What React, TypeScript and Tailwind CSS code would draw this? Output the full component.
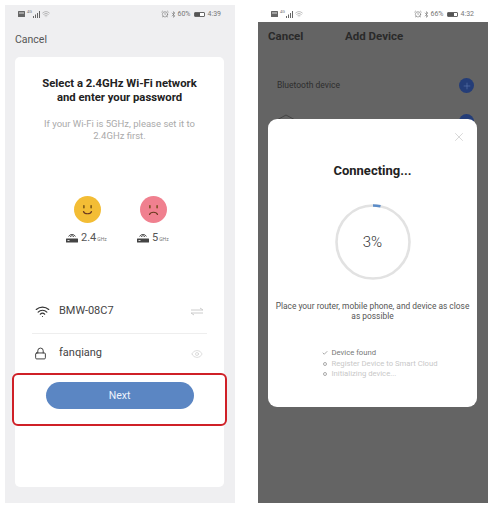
import { AlarmClock, Bluetooth, Check, Eye, Lock, Plus, Wifi, X } from "lucide-react";

function StatusBar({ battery, level, time }: { battery: string; level: number; time: string }) {
  return (
    <div className="flex h-[16px] items-center justify-between pl-[13px] pr-[14px] text-[7px] leading-none text-[#777]">
      <div className="flex items-center gap-[1px]">
        <svg width="7" height="6" viewBox="0 0 7 6">
          <rect width="7" height="6" rx="0.5" fill="#666" />
          <rect x="1" y="1.5" width="5" height="1" fill="#ddd" />
        </svg>
        <span className="ml-[1px] self-start text-[4px]">4G</span>
        <svg width="7" height="7" viewBox="0 0 7 7" fill="#666">
          <rect x="0" y="5" width="1" height="2" />
          <rect x="2" y="3.5" width="1" height="3.5" />
          <rect x="4" y="2" width="1" height="5" />
          <rect x="6" y="0" width="1" height="7" />
        </svg>
        <Wifi size={8} strokeWidth={1.6} className="ml-[1px] text-[#888]" />
      </div>
      <div className="flex items-center gap-[1px]">
        <AlarmClock size={8} strokeWidth={1.8} />
        <Bluetooth size={7} strokeWidth={2} />
        <span>{battery}</span>
        <div className="mx-[2px] flex h-[5px] w-[11px] items-center rounded-[1px] border border-[#666] bg-white">
          <div className="h-full bg-[#555]" style={{ width: `${level}%` }} />
        </div>
        <span>{time}</span>
      </div>
    </div>
  );
}

function RouterIcon() {
  return (
    <svg width="12" height="11" viewBox="0 0 12 11" fill="none" stroke="#444">
      <path d="M2.5 4.5a4 4 0 0 1 7 0M4 5a2.2 2.2 0 0 1 4 0" strokeWidth="0.9" />
      <rect x="0" y="6.5" width="12" height="4" rx="0.5" fill="#444" stroke="none" />
      <rect x="1.5" y="8" width="2" height="0.8" fill="#fff" stroke="none" />
    </svg>
  );
}

function Band({ big }: { big: string }) {
  return (
    <div className="flex items-center gap-[3px]">
      <RouterIcon />
      <span className="text-[11px] leading-none text-[#555]">{big}</span>
      <span className="mt-[3px] -ml-[2px] text-[5px] leading-none text-[#777]">GHz</span>
    </div>
  );
}

function Face({ color, mouth }: { color: string; mouth: string }) {
  return (
    <svg width="27" height="27" viewBox="0 0 27 27" fill="none">
      <circle cx="13.5" cy="13.5" r="13.5" fill={color} />
      <rect x="9.2" y="9" width="1.4" height="3.4" rx="0.7" fill="#6b4a12" />
      <rect x="16.4" y="9" width="1.4" height="3.4" rx="0.7" fill="#6b4a12" />
      <path d={mouth} stroke="#6b3a20" strokeWidth="1.2" strokeLinecap="round" />
    </svg>
  );
}

function LeftPhone() {
  return (
    <div className="flex h-[498px] w-[230px] flex-col bg-[#efeff1]">
      <div className="mt-[1px]">
        <StatusBar battery="60%" level={65} time="4:39" />
      </div>
      <div className="ml-[10px] mt-[11px] h-[14px] text-[10.5px] leading-[14px] text-[#555]">Cancel</div>
      <div className="ml-[10px] mt-[10px] flex h-[430px] w-[209px] flex-col rounded-[5px] bg-white">
        <h1 className="mt-[20px] text-center text-[11.3px] font-bold leading-[14px] text-[#222]">
          Select a 2.4GHz Wi-Fi network
          <br />
          and enter your password
        </h1>
        <p className="mt-[13px] text-center text-[9.5px] leading-[11.5px] text-[#aaa]">
          If your Wi-Fi is 5GHz, please set it to
          <br />
          2.4GHz first.
        </p>
        <div className="mt-[55px] flex pl-[39px]">
          <div className="flex w-[66px] flex-col items-center">
            <Face color="#f3bd35" mouth="M9.5 15.5c1 3 7 3 8 0" />
          </div>
          <div className="flex w-[66px] flex-col items-center">
            <Face color="#f0808f" mouth="M9.5 18.5c1-3 7-3 8 0" />
          </div>
        </div>
        <div className="mt-[9px] flex pl-[51px]">
          <div className="w-[71px]">
            <Band big="2.4" />
          </div>
          <Band big="5" />
        </div>
        <div className="mx-[17px] mt-[47px] flex h-[44px] items-center border-b border-[#eee]">
          <Wifi size={15} strokeWidth={1.8} className="ml-[3px] text-[#333]" />
          <span className="ml-[9px] text-[11px] text-[#444]">BMW-08C7</span>
          <svg className="ml-auto mr-[4px]" width="12" height="9" viewBox="0 0 12 9" fill="none" stroke="#ccc">
            <path d="M0 3h12L9 1M12 6H0l3 2" strokeWidth="1" />
          </svg>
        </div>
        <div className="mx-[17px] flex h-[39px] items-center">
          <Lock size={13} strokeWidth={1.7} className="ml-[2px] text-[#333]" />
          <span className="ml-[12px] text-[11px] text-[#444]">fanqiang</span>
          <Eye size={12} strokeWidth={1.3} className="ml-auto mr-[4px] text-[#ccc]" />
        </div>
        <div className="-mx-[3px] flex h-[53px] items-start justify-center rounded-[6px] border-2 border-[#cf2027] bg-white pt-[7px]">
          <button className="flex h-[27px] w-[148px] items-center justify-center rounded-full bg-[#5b86c3] text-[10.5px] text-[#eef3fb]">
            Next
          </button>
        </div>
      </div>
    </div>
  );
}

function RightPhone() {
  return (
    <div className="w-[230px]">
      <div className="mt-[1px] h-[16px]">
        <StatusBar battery="66%" level={75} time="4:32" />
      </div>
      <div className="relative h-[481px] bg-[#646464]">
        <div className="flex h-[21px] items-end pl-[10px] text-[11.5px] font-bold leading-[14px] text-[#2a2a2a]">
          <span className="w-[77px]">Cancel</span>
          <span>Add Device</span>
        </div>
        <div className="mt-[35px] flex h-[15px] items-center justify-between pl-[19px] pr-[14px]">
          <span className="text-[8.5px] text-[#2e2e2e]">Bluetooth device</span>
          <div className="flex h-[15px] w-[15px] items-center justify-center rounded-full bg-[#243d78]">
            <Plus size={10} strokeWidth={1.5} className="text-[#5f78ad]" />
          </div>
        </div>
        <div className="mt-[21px] flex items-start justify-between pl-[16px] pr-[14px]">
          <svg width="24" height="8" viewBox="0 0 24 8" fill="none" stroke="#444">
            <path d="M1 7L12 1l11 6" />
          </svg>
          <div className="h-[15px] w-[15px] rounded-full bg-[#243d78]" />
        </div>
        <div className="absolute left-[10px] top-[97px] flex h-[288px] w-[209px] flex-col items-center rounded-[9px] bg-white">
          <X size={14} strokeWidth={1} className="absolute right-[11px] top-[11px] text-[#bbb]" />
          <h2 className="mt-[44px] h-[16px] text-[13px] font-bold leading-[16px] text-[#222]">Connecting...</h2>
          <div className="relative mt-[25px] h-[76px] w-[76px]">
            <svg width="76" height="76" viewBox="0 0 76 76" fill="none">
              <circle cx="38" cy="38" r="36.5" stroke="#e2e2e2" strokeWidth="2.6" />
              <path d="M38 1.5a36.5 36.5 0 0 1 7.5.8" stroke="#5b8cc8" strokeWidth="2.6" />
            </svg>
            <span className="absolute inset-0 flex items-center justify-center text-[15px] font-light text-[#333]">3%</span>
          </div>
          <p className="mt-[21px] w-[197px] text-center text-[8.4px] leading-[10px] text-[#555]">
            Place your router, mobile phone, and device as close as possible
          </p>
          <ul className="mt-[28px] flex w-[140px] flex-col gap-[2.5px] pl-[19px] text-[7.7px] leading-[8px]">
            <li className="flex items-center gap-[4px] text-[#777]">
              <Check size={6} strokeWidth={2.5} className="text-[#777]" />
              Device found
            </li>
            <li className="flex items-center gap-[4px] text-[#c8c8c8]">
              <span className="mx-[1px] h-[4px] w-[4px] rounded-full border border-[#aaa]" />
              Register Device to Smart Cloud
            </li>
            <li className="flex items-center gap-[4px] text-[#c8c8c8]">
              <span className="mx-[1px] h-[4px] w-[4px] rounded-full border border-[#aaa]" />
              Initializing device...
            </li>
          </ul>
        </div>
      </div>
    </div>
  );
}

export default function App() {
  return (
    <div className="flex h-[510px] w-[494px] gap-[23px] overflow-hidden bg-white pl-[5px] pt-[5px] font-['Roboto',sans-serif]">
      <LeftPhone />
      <RightPhone />
    </div>
  );
}
